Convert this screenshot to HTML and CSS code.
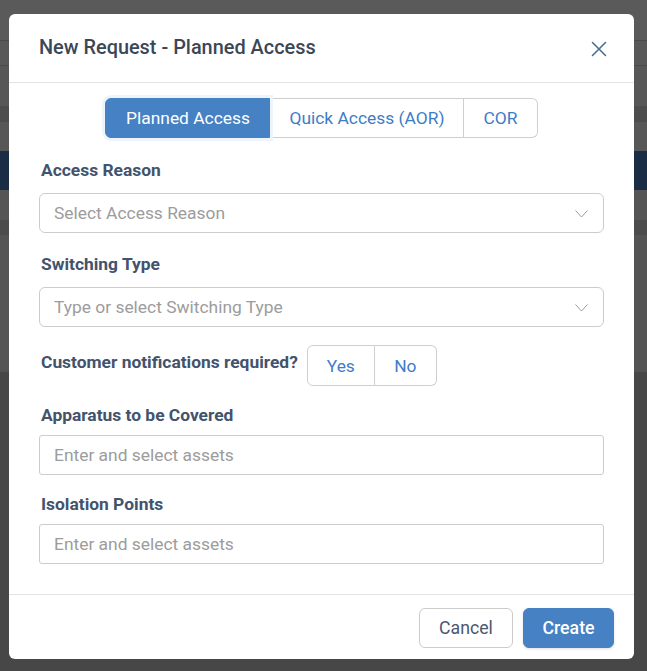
FILE: index.html
```html
<!DOCTYPE html>
<html>
<head>
<meta charset="utf-8">
<link rel="stylesheet" href="styles.css">
</head>
<body>
<div class="page">
  <div class="band b-top"></div>
  <div class="band b-line"></div>
  <div class="band b-mid1"></div>
  <div class="band b-line"></div>
  <div class="band b-mid2"></div>
  <div class="band b-dark"></div>
  <div class="band b-mid3"></div>
  <div class="band b-navy"></div>
  <div class="band b-mid4"></div>
  <div class="band b-dark2"></div>
  <div class="band b-mid5"></div>
  <div class="band b-bottom"></div>
</div>

<div class="overlay">
  <div class="modal">
    <div class="modal-header">
      <h1 class="modal-title">New Request - Planned Access</h1>
      <button class="close-btn" aria-label="Close">
        <svg width="16" height="16" viewBox="0 0 16 16"><path d="M1.5 1.5 L14.5 14.5 M14.5 1.5 L1.5 14.5" stroke="#4d6e95" stroke-width="1.6" fill="none" stroke-linecap="round"/></svg>
      </button>
    </div>
    <div class="modal-body">
      <div class="tabs">
        <button class="tab active">Planned Access</button>
        <button class="tab">Quick Access (AOR)</button>
        <button class="tab">COR</button>
      </div>

      <div class="field first">
        <label class="label">Access Reason</label>
        <div class="select">
          <span class="placeholder">Select Access Reason</span>
          <svg class="chev" width="13" height="8" viewBox="0 0 13 8"><path d="M0.5 0.5 L6.5 7 L12.5 0.5" stroke="#9a9a9a" stroke-width="1" fill="none"/></svg>
        </div>
      </div>

      <div class="field">
        <label class="label">Switching Type</label>
        <div class="select">
          <span class="placeholder">Type or select Switching Type</span>
          <svg class="chev" width="13" height="8" viewBox="0 0 13 8"><path d="M0.5 0.5 L6.5 7 L12.5 0.5" stroke="#9a9a9a" stroke-width="1" fill="none"/></svg>
        </div>
      </div>

      <div class="notif-row">
        <span class="label notif-label">Customer notifications required?</span>
        <div class="yn">
          <button class="yn-btn yes">Yes</button>
          <button class="yn-btn no">No</button>
        </div>
      </div>

      <div class="field asset">
        <label class="label">Apparatus to be Covered</label>
        <div class="input"><span class="placeholder">Enter and select assets</span></div>
      </div>

      <div class="field asset">
        <label class="label">Isolation Points</label>
        <div class="input"><span class="placeholder">Enter and select assets</span></div>
      </div>
    </div>
    <div class="modal-footer">
      <button class="btn btn-cancel">Cancel</button>
      <button class="btn btn-create">Create</button>
    </div>
  </div>
</div>
</body>
</html>
```

FILE: styles.css
```css
* { box-sizing: border-box; }
html, body { margin: 0; padding: 0; }
body {
  width: 647px;
  height: 671px;
  overflow: hidden;
  font-family: Roboto, "Liberation Sans", Arial, sans-serif;
  background: #474747;
  position: relative;
}
.page { display: flex; flex-direction: column; }
.band { width: 100%; }
.b-top { height: 40px; background: #5a5a5a; }
.b-line { height: 1px; background: #4a4a4a; }
.b-mid1 { height: 24px; background: #585858; }
.b-mid2 { height: 40px; background: #575757; }
.b-dark { height: 16px; background: #4d4d4d; }
.b-mid3 { height: 29px; background: #575757; }
.b-navy { height: 39px; background: #1b2d45; }
.b-mid4 { height: 30px; background: #555555; }
.b-dark2 { height: 15px; background: #4c4c4c; }
.b-mid5 { height: 137px; background: #545454; }
.b-bottom { height: 300px; background: #474747; }

.overlay {
  position: absolute;
  inset: 0;
  display: flex;
  align-items: flex-start;
  padding: 14px 0 0 9px;
}
.modal {
  width: 625px;
  height: 645px;
  background: #fff;
  border-radius: 6px;
  display: flex;
  flex-direction: column;
  overflow: hidden;
}
.modal-header {
  height: 69px;
  border-bottom: 1px solid #e4e4e4;
  display: flex;
  align-items: center;
  justify-content: space-between;
  padding: 0 27px 0 30px;
}
.modal-title {
  margin: 0;
  font-size: 19.9px;
  font-weight: 500;
  color: #3b4757;
  padding-bottom: 2px;
}
.close-btn {
  background: none;
  border: 0;
  padding: 0;
  width: 16px;
  height: 16px;
  display: flex;
  margin-top: 1px;
}
.modal-body {
  padding: 15px 30px 30px 30px;
  border-bottom: 1px solid #e4e4e4;
}
.tabs {
  display: flex;
  justify-content: center;
}
.tab {
  height: 40px;
  font-family: inherit;
  font-size: 17.4px;
  color: #3d7dc8;
  background: #fff;
  border: 1px solid #cfcfcf;
  border-left: 0;
  padding: 0 19px;
}
.tab:first-child { border-left: 1px solid #cfcfcf; border-radius: 6px 0 0 6px; }
.tab:last-child { border-radius: 0 6px 6px 0; padding: 0 19px; }
.tab.active {
  width: 165px;
  background: #4581c3;
  border-color: #4581c3;
  color: #fff;
  box-shadow: 0 0 0 3px #edf4fb;
  position: relative;
  z-index: 1;
}
.field { margin-top: 21px; display: flex; flex-direction: column; }
.field.first { margin-top: 22px; }
.label {
  font-size: 17.4px;
  font-weight: 700;
  line-height: 20px;
  color: #42536d;
  margin-left: 2px;
  margin-bottom: 13px;
}
.select, .input {
  height: 40px;
  border: 1px solid #cccccc;
  border-radius: 6px;
  display: flex;
  align-items: center;
  justify-content: space-between;
  padding: 0 15px 0 14px;
}
.input { border-radius: 3px; }
.placeholder { font-size: 17.4px; color: #9c9c9c; }
.chev { margin-top: 1px; }
.notif-row {
  margin-top: 18px;
  display: flex;
  align-items: center;
  gap: 9px;
}
.notif-label { margin-bottom: 7px; }
.yn { display: flex; }
.yn-btn {
  height: 41px;
  font-family: inherit;
  font-size: 17.4px;
  color: #3d7dc8;
  background: #fff;
  border: 1px solid #cfcfcf;
}
.yes { width: 68px; border-radius: 6px 0 0 6px; }
.no { width: 62px; border-left: 0; border-radius: 0 6px 6px 0; }
.asset { margin-top: 19px; }
.asset .label { margin-bottom: 10px; }
.modal-footer {
  flex: 1;
  display: flex;
  justify-content: flex-end;
  align-items: flex-start;
  gap: 10px;
  padding: 13px 20px 0 0;
}
.btn {
  height: 40px;
  font-family: inherit;
  font-size: 17.7px;
  border-radius: 6px;
}
.btn-cancel {
  width: 94px;
  background: #fff;
  border: 1px solid #cccccc;
  color: #4a5870;
}
.btn-create {
  width: 91px;
  background: #4581c3;
  border: 1px solid #4581c3;
  color: #fff;
  font-weight: 500;
  box-shadow: 0 1px 3px rgba(0,0,0,0.12);
}
```
